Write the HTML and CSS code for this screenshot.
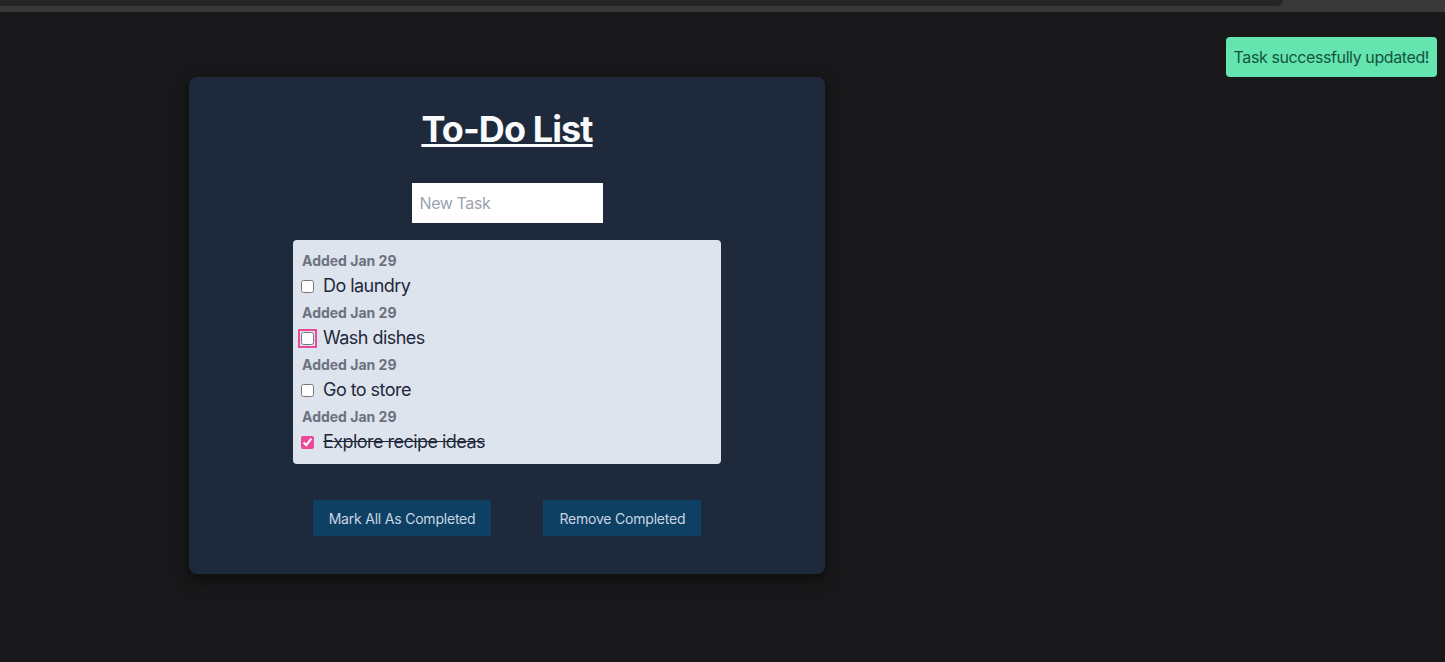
FILE: index.html
```html
<!DOCTYPE html>
<html lang="en">
<head>
<meta charset="utf-8">
<title>To-Do List</title>
<link rel="stylesheet" href="styles.css">
</head>
<body>
<div class="scrollbar"><div class="scrollbar-thumb"></div></div>
<main class="page">
  <section class="card">
    <h1 class="title">To-Do List</h1>
    <input class="new-task" type="text" placeholder="New Task">
    <ul class="tasks">
      <li class="task">
        <span class="added">Added Jan 29</span>
        <label class="task-row"><input type="checkbox" class="check"><span class="task-text">Do laundry</span></label>
      </li>
      <li class="task">
        <span class="added">Added Jan 29</span>
        <label class="task-row"><input type="checkbox" class="check focused"><span class="task-text">Wash dishes</span></label>
      </li>
      <li class="task">
        <span class="added">Added Jan 29</span>
        <label class="task-row"><input type="checkbox" class="check"><span class="task-text">Go to store</span></label>
      </li>
      <li class="task">
        <span class="added">Added Jan 29</span>
        <label class="task-row"><input type="checkbox" class="check" checked><span class="task-text done">Explore recipe ideas</span></label>
      </li>
    </ul>
    <div class="actions">
      <button class="btn">Mark All As Completed</button>
      <button class="btn">Remove Completed</button>
    </div>
  </section>
</main>
<div class="toast">Task successfully updated!</div>
</body>
</html>
```
FILE: styles.css
```css
* { box-sizing: border-box; }
html, body {
  margin: 0;
  height: 100%;
  background: #18181a;
  font-family: Inter, "Noto Sans", sans-serif;
}
.scrollbar {
  height: 12px;
  background: #393939;
}
.scrollbar-thumb {
  width: 1283px;
  height: 6px;
  background: #252525;
  border-radius: 0 0 8px 0;
}
.page {
  display: flex;
  padding: 65px 0 0 189px;
}
.card {
  width: 636px;
  height: 497px;
  background: #1e293b;
  border-radius: 8px;
  box-shadow: 0 6px 14px rgba(0,0,0,0.45);
  display: flex;
  flex-direction: column;
  align-items: center;
  padding-top: 32px;
}
.title {
  margin: 0;
  font-size: 36px;
  line-height: 40px;
  font-weight: 700;
  letter-spacing: -0.025em;
  color: #f8fafc;
  text-decoration: underline;
  text-decoration-thickness: 3px;
  text-underline-offset: 2px;
}
.new-task {
  margin-top: 34px;
  width: 191px;
  height: 40px;
  border: none;
  outline: none;
  background: #ffffff;
  padding: 0 8px;
  font-family: Inter, sans-serif;
  font-size: 16px;
  letter-spacing: -0.025em;
  color: #111827;
}
.new-task::placeholder { color: #9ca3af; }
.tasks {
  list-style: none;
  margin: 17px 0 0;
  width: 428px;
  height: 224px;
  background: #dee4ee;
  border-radius: 4px;
  padding: 11px 9px 9px;
  display: flex;
  flex-direction: column;
  gap: 4px;
}
.task {
  display: flex;
  flex-direction: column;
}
.added {
  font-size: 14px;
  line-height: 20px;
  font-weight: 700;
  color: #6b7280;
}
.task-row {
  display: flex;
  align-items: center;
  gap: 9px;
  height: 28px;
  padding-top: 2px;
}
.check {
  margin: 0 0 0 -1px;
  width: 13px;
  height: 13px;
  accent-color: #ec4899;
}
.check.focused {
  outline: 2px solid #ec4899;
  outline-offset: 1px;
  border-radius: 3px;
}
.task-text {
  font-size: 18px;
  line-height: 28px;
  letter-spacing: -0.03em;
  color: #1e293b;
}
.task-text.done {
  text-decoration: line-through;
}
.actions {
  margin-top: 36px;
  display: flex;
  gap: 52px;
}
.btn {
  height: 36px;
  padding: 0 16px;
  border: none;
  border-radius: 0;
  background: #0e4064;
  color: #cbd5e1;
  font-family: Inter, sans-serif;
  font-size: 14px;
  letter-spacing: -0.015em;
}
.toast {
  position: fixed;
  top: 37px;
  right: 8px;
  height: 40px;
  padding: 0 8px;
  display: flex;
  align-items: center;
  background: #64e4ae;
  color: #14543f;
  border-radius: 4px;
  font-size: 16px;
  letter-spacing: -0.025em;
}
```
